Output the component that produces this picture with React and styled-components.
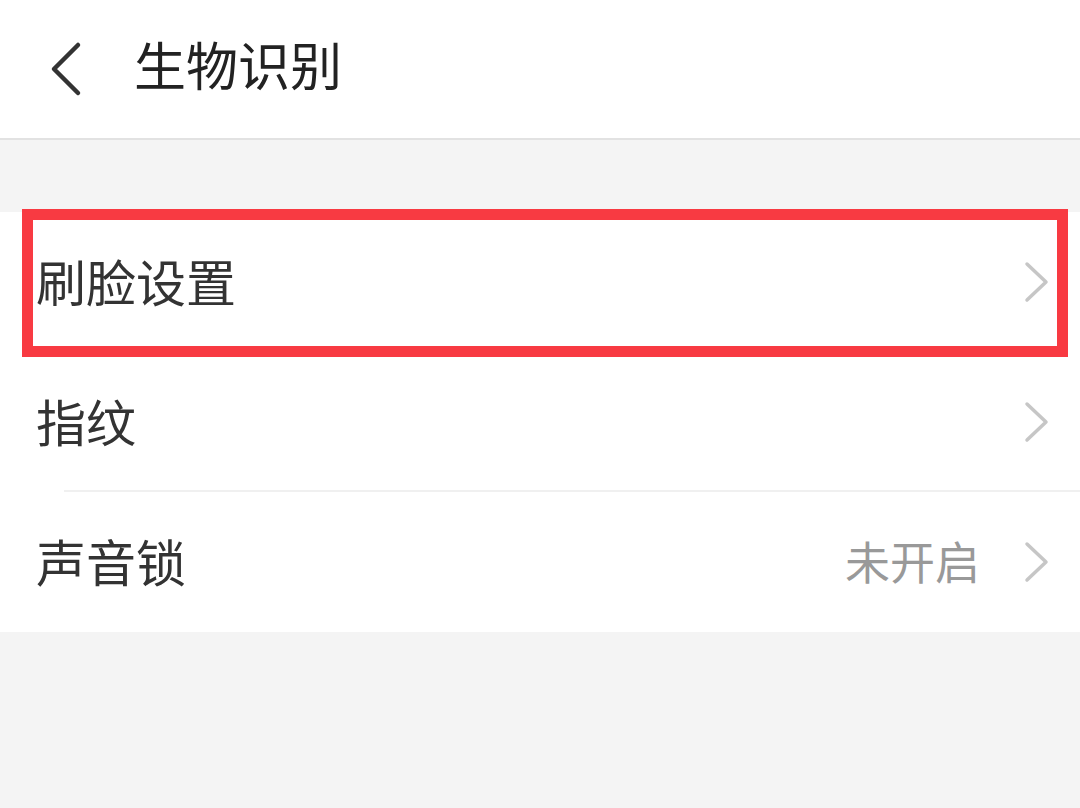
import React from 'react';
import styled, { createGlobalStyle } from 'styled-components';

const GlobalStyle = createGlobalStyle`
    html, body {
        margin: 0;
        padding: 0;
        background: #f4f4f4;
        font-family: "Noto Sans CJK SC", "Noto Sans", sans-serif;
    }
`;

const Page = styled.div`
    width: 1080px;
    height: 808px;
    background: #f4f4f4;
    overflow: hidden;
`;

const Header = styled.div`
    height: 138px;
    background: #fff;
    border-bottom: 2px solid #e2e2e2;
    display: flex;
    align-items: center;
    box-sizing: content-box;
`;

const BackButton = styled.div`
    width: 134px;
    height: 138px;
    display: flex;
    align-items: center;
    padding-left: 48px;
    box-sizing: border-box;
`;

const Title = styled.div`
    font-size: 52px;
    color: #222;
    line-height: 1;
    margin-top: -10px;
`;

const Gap = styled.div`
    height: 72px;
`;

const List = styled.div`
    background: #fff;
`;

const Row = styled.div`
    position: relative;
    height: 140px;
    display: flex;
    align-items: center;
    padding: 0 30px 0 36px;
    box-sizing: border-box;
    &::after {
        content: '';
        display: ${(p) => (p.divider ? 'block' : 'none')};
        position: absolute;
        left: 64px;
        right: 0;
        bottom: 0;
        height: 2px;
        background: #f0f0f0;
    }
`;

const Label = styled.div`
    flex: 1;
    font-size: 50px;
    color: #333;
    line-height: 1;
    margin-top: -4px;
`;

const Value = styled.div`
    font-size: 45px;
    color: #999;
    margin-right: 44px;
    line-height: 1;
    margin-top: -4px;
`;

const Highlight = styled.div`
    position: absolute;
    left: 22px;
    right: 12px;
    top: -3px;
    bottom: -5px;
    border: 11px solid #f83a42;
    pointer-events: none;
`;

const Back = () => (
    <svg width="34" height="56" viewBox="0 0 34 56">
        <path d="M30 4 L6 28 L30 52" fill="none" stroke="#333" strokeWidth="4.5" strokeLinecap="round" strokeLinejoin="round" />
    </svg>
);

const Chevron = () => (
    <svg width="26" height="42" viewBox="0 0 26 42">
        <path d="M3 3 L22 21 L3 39" fill="none" stroke="#c6c6c6" strokeWidth="3.5" strokeLinecap="round" strokeLinejoin="round" />
    </svg>
);

const items = [
    { label: '刷脸设置', highlight: true },
    { label: '指纹', divider: true },
    { label: '声音锁', value: '未开启' },
];

const App = () => {
    return (
        <Page>
            <GlobalStyle />
            <Header>
                <BackButton>
                    <Back />
                </BackButton>
                <Title>生物识别</Title>
            </Header>
            <Gap />
            <List>
                {items.map((item) => (
                    <Row key={item.label} divider={item.divider}>
                        <Label>{item.label}</Label>
                        {item.value && <Value>{item.value}</Value>}
                        <Chevron />
                        {item.highlight && <Highlight />}
                    </Row>
                ))}
            </List>
        </Page>
    );
};

export default App;
